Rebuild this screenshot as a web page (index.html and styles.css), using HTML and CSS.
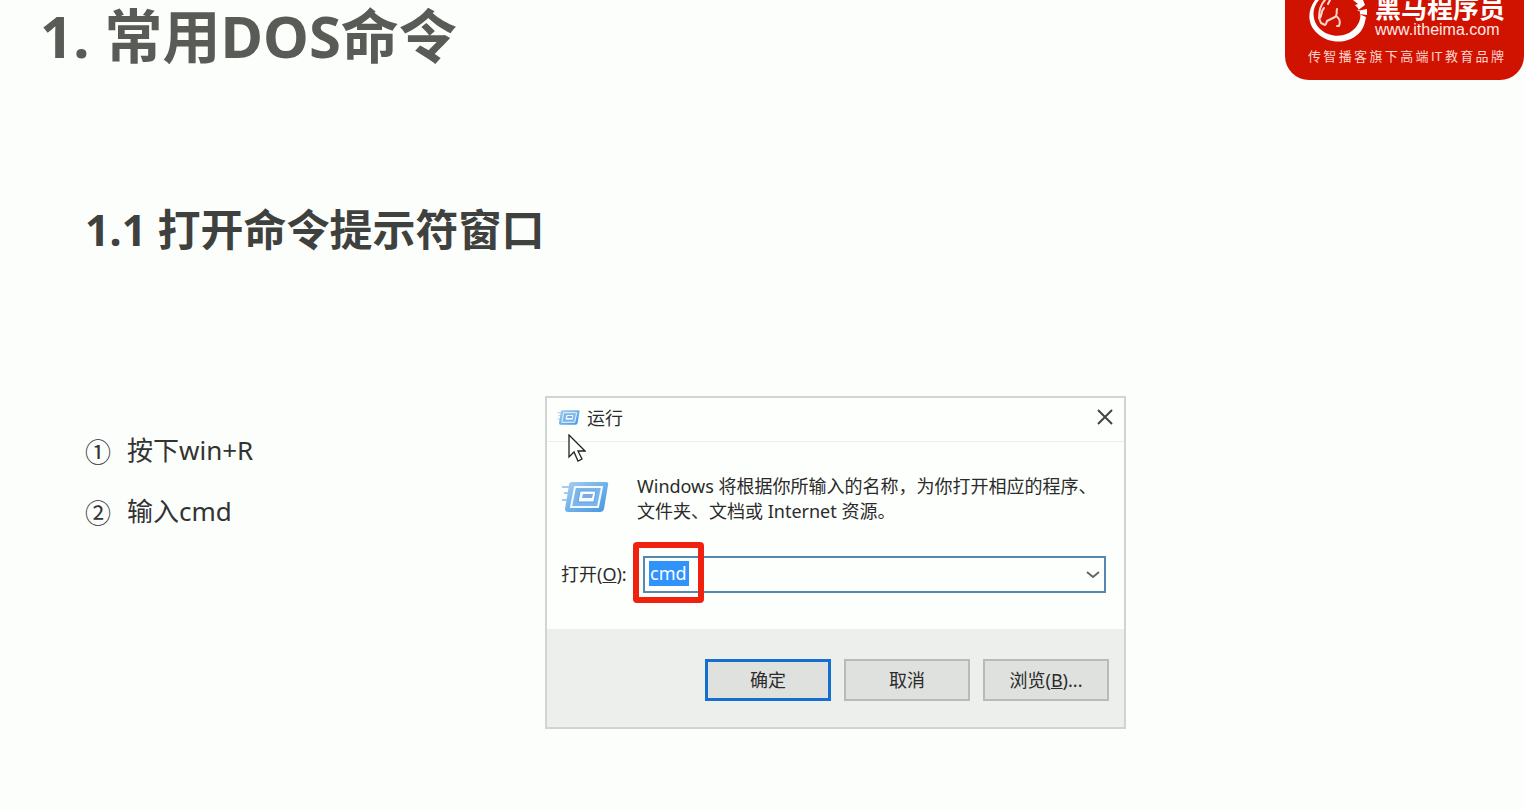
FILE: index.html
```html
<!DOCTYPE html>
<html lang="zh-CN">
<head>
<meta charset="utf-8">
<title>常用DOS命令</title>
<link rel="stylesheet" href="styles.css">
</head>
<body>
<header class="top">
  <h1 class="title">1. 常用DOS命令</h1>
  <div class="brand">
    <div class="brand-main">
      <svg class="brand-logo" width="62" height="48" viewBox="0 0 62 48" aria-hidden="true">
        <path d="M7 0C-1 11 -1 25 10 34C22 45 43 44 53 31C56 27 57 22 58 17L51 14L59 15L59 9L49 11L57 5L55 0H45L50 4L47 5C53 10 54 17 50 24C43 37 24 40 12 29C4 21 3 9 11 0Z" fill="#fff"/>
        <path d="M17 0C13 4 11 9 11 18L13 23L17 25M20 4L22 0M16 8C13 11 14 15 12 18M29 9C28 12 30 15 27 17L19 21M28 16C31 18 33 21 31 26L29 26M19 21L18 24" fill="none" stroke="#ffd5cc" stroke-width="2" stroke-linecap="round" stroke-linejoin="round"/>
      </svg>
      <div class="brand-words">
        <strong class="brand-name">黑马程序员</strong>
        <a class="brand-url" href="#">www.itheima.com</a>
      </div>
    </div>
    <p class="brand-tag">传智播客旗下高端IT教育品牌</p>
  </div>
</header>

<main class="content">
  <h2 class="subtitle">1.1 打开命令提示符窗口</h2>
  <div class="columns">
    <ol class="steps">
      <li class="step"><span class="step-number">①</span><span>按下win+R</span></li>
      <li class="step"><span class="step-number">②</span><span>输入cmd</span></li>
    </ol>

    <section class="dialog" role="dialog" aria-labelledby="run-title">
      <svg width="0" height="0" class="defs" aria-hidden="true">
        <defs>
          <linearGradient id="frame" x1="0" y1="0" x2="1" y2="1">
            <stop offset="0" stop-color="#a9cdf0"/>
            <stop offset=".5" stop-color="#71b1ea"/>
            <stop offset="1" stop-color="#4795dc"/>
          </linearGradient>
          <symbol id="run" viewBox="0 0 48 34">
            <path d="M1 7H10M3 13H9M1 20H8" stroke="#a5ccf0" stroke-width="2"/>
            <path d="M11 2H45Q48 2 47 5L43 29Q42 32 39 32H7Q4 32 4 29L8 5Q8 2 11 2Z" fill="url(#frame)"/>
            <path d="M14 7H41L37 27H10Z" fill="#78b6ec" stroke="#f2f9ff" stroke-width="2"/>
            <path d="M19 11H35L33 22H17Z" fill="#fafdff" stroke="#5c9fe2" stroke-width="1"/>
            <path d="M22 14H32L31 18H21Z" fill="#7eaae4"/>
          </symbol>
        </defs>
      </svg>
      <div class="titlebar">
        <svg class="icon-small" width="23" height="17" aria-hidden="true"><use href="#run"/></svg>
        <span class="dialog-title" id="run-title">运行</span>
        <button class="close" type="button" aria-label="关闭">
          <svg width="18" height="18" viewBox="0 0 18 18"><path d="M2 2L16 16M16 2L2 16" stroke="#444" stroke-width="2" fill="none"/></svg>
        </button>
      </div>
      <div class="dialog-body">
        <div class="message">
          <svg class="icon-large" width="48" height="34" aria-hidden="true"><use href="#run"/></svg>
          <p class="message-text">Windows 将根据你所输入的名称，为你打开相应的程序、<br>文件夹、文档或 Internet 资源。</p>
        </div>
        <div class="field">
          <label class="field-label" for="command">打开(<u>O</u>):</label>
          <div class="combo">
            <input class="combo-input" id="command" type="text" value="cmd">
            <button class="combo-arrow" type="button" aria-label="展开">
              <svg width="14" height="8" viewBox="0 0 14 8"><path d="M1 1L7 6L13 1" stroke="#666" stroke-width="2" fill="none"/></svg>
            </button>
            <span class="highlight"></span>
          </div>
        </div>
      </div>
      <div class="actions">
        <button class="button button-default" type="button">确定</button>
        <button class="button" type="button">取消</button>
        <button class="button" type="button">浏览(<u>B</u>)...</button>
      </div>
      <svg class="cursor" width="18" height="28" viewBox="0 0 18 28" aria-hidden="true">
        <path d="M1 1V23L6 18L10 27L14 25L10 17H17Z" fill="#fff" stroke="#222" stroke-width="1.3"/>
      </svg>
    </section>
  </div>
</main>
</body>
</html>
```
FILE: styles.css
```css
* { box-sizing: border-box; }

body {
  margin: 0;
  background: #fcfefb;
  color: #333;
  font-family: "Noto Sans", "Noto Sans CJK SC", sans-serif;
}

h1, h2, p, ol { margin: 0; padding: 0; }

button, input { font: inherit; color: inherit; }

.top {
  display: flex;
  justify-content: space-between;
  align-items: flex-start;
  padding-left: 40px;
}

.title {
  font-size: 58px;
  line-height: 72px;
  color: #595b57;
}

.brand {
  width: 239px;
  height: 80px;
  padding: 0 20px 0 23px;
  overflow: hidden;
  border-radius: 0 0 24px 24px;
  background: #d01200;
  color: #fff;
}

.brand-main {
  display: flex;
  gap: 5px;
  height: 48px;
}

.brand-logo { flex: none; }

.brand-words {
  display: flex;
  flex-direction: column;
  margin-top: -5px;
  white-space: nowrap;
}

.brand-name {
  font-size: 26px;
  line-height: 26px;
}

.brand-url {
  color: #ffe9e4;
  font-family: "Liberation Sans", sans-serif;
  font-size: 16px;
  line-height: 18px;
  text-decoration: none;
}

.brand-tag {
  color: #ffd5cc;
  font-family: "Liberation Sans", "Noto Sans CJK SC", sans-serif;
  font-size: 13px;
  line-height: 18px;
  text-align-last: justify;
}

.content { padding: 118px 24px 0 85px; }

.subtitle {
  font-size: 43px;
  line-height: 64px;
  color: #3f413e;
}

.columns {
  display: flex;
  align-items: flex-start;
  padding-top: 134px;
}

.steps {
  flex: 0 0 460px;
  padding-top: 24px;
  list-style: none;
}

.step {
  display: flex;
  gap: 16px;
  font-size: 26px;
  line-height: 61px;
}

.step-number {
  font-family: "Noto Sans CJK SC", sans-serif;
}

.dialog {
  position: relative;
  flex: 0 1 581px;
  border: 2px solid #d2d4d2;
  background: #fdfffc;
  color: #2b2b2b;
  font-size: 18px;
}

.defs { position: absolute; }

.titlebar {
  display: flex;
  align-items: center;
  gap: 7px;
  height: 44px;
  padding: 0 10px 5px;
  border-bottom: 1px solid #eceeec;
}

.close {
  display: flex;
  margin-left: auto;
  padding: 0;
  border: 0;
  background: none;
}

.dialog-body { padding: 32px 18px 36px 14px; }

.message {
  display: flex;
  gap: 28px;
}

.icon-large { margin-top: 6px; }

.message-text {
  line-height: 25px;
  white-space: nowrap;
}

.field {
  display: flex;
  align-items: center;
  gap: 12px;
  margin-top: 32px;
}

.field-label {
  flex: 0 0 70px;
  padding-bottom: 4px;
  white-space: nowrap;
}

.combo {
  position: relative;
  display: flex;
  flex: 1;
  height: 37px;
  border: 2px solid #5488b0;
}

.combo-input {
  flex: 1;
  min-width: 0;
  padding: 0 4px 4px 5px;
  border: 0;
  outline: 0;
  background: linear-gradient(#2f93fb, #2f93fb) 4px 3px / 40px 25px no-repeat;
  color: #fff;
}

.combo-arrow {
  display: flex;
  align-items: center;
  padding: 0 4px;
  border: 0;
  background: none;
}

.highlight {
  position: absolute;
  top: -16px;
  left: -12px;
  width: 71px;
  height: 61px;
  border: 6px solid #f0210f;
  border-radius: 4px;
}

.actions {
  display: flex;
  justify-content: flex-end;
  gap: 13px;
  padding: 30px 15px 26px;
  background: #edefec;
}

.button {
  flex: 0 0 126px;
  height: 42px;
  padding: 0 0 3px;
  border: 2px solid #b8bab8;
  background: #dfe1de;
}

.button-default { border: 3px solid #1470cc; }

.cursor {
  position: absolute;
  top: 36px;
  left: 21px;
}
```
